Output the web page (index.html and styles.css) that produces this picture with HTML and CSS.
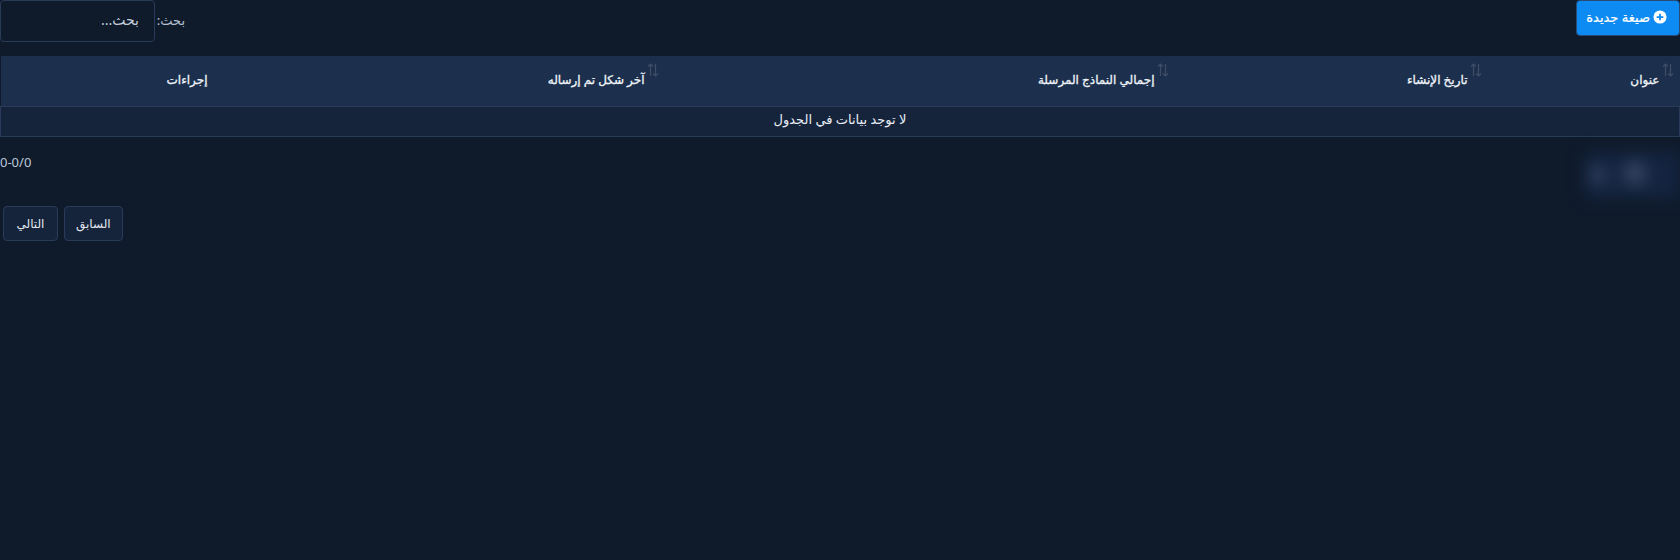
FILE: index.html
```html
<!DOCTYPE html>
<html lang="ar" dir="rtl">
<head>
    <meta charset="UTF-8" />
    <title>الصيغ</title>
    <link rel="stylesheet" href="styles.css">
</head>
<body>
    <div class="toolbar">
        <button class="btn-new">
            <svg class="plus-icon" viewBox="0 0 16 16"><circle cx="8" cy="8" r="7.500" fill="#fff"/><path d="M8 4.200v7.600M4.200 8h7.600" stroke="#0d8bf2" stroke-width="2"/></svg>
            صيغة جديدة
        </button>
        <div class="search">
            <label>بحث:</label>
            <input type="text" placeholder="بحث..." />
        </div>
    </div>

    <table class="data-table">
        <thead>
            <tr>
                <th class="col-title"><svg class="sort-icon" viewBox="0 0 12 16"><path d="M3.500 14V2M1 4.500 3.500 2 6 4.500M8.500 2v12M6 11.500 8.500 14l2.500-2.500" /></svg>عنوان</th>
                <th class="col-date"><svg class="sort-icon" viewBox="0 0 12 16"><path d="M3.500 14V2M1 4.500 3.500 2 6 4.500M8.500 2v12M6 11.500 8.500 14l2.500-2.500" /></svg>تاريخ الإنشاء</th>
                <th class="col-total"><svg class="sort-icon" viewBox="0 0 12 16"><path d="M3.500 14V2M1 4.500 3.500 2 6 4.500M8.500 2v12M6 11.500 8.500 14l2.500-2.500" /></svg>إجمالي النماذج المرسلة</th>
                <th class="col-last"><svg class="sort-icon" viewBox="0 0 12 16"><path d="M3.500 14V2M1 4.500 3.500 2 6 4.500M8.500 2v12M6 11.500 8.500 14l2.500-2.500" /></svg>آخر شكل تم إرساله</th>
                <th class="col-actions">إجراءات</th>
            </tr>
        </thead>
        <tbody>
            <tr>
                <td colspan="5">لا توجد بيانات في الجدول</td>
            </tr>
        </tbody>
    </table>

    <div class="count" dir="ltr">0-0/0</div>

    <div class="pager" dir="ltr">
        <button>التالي</button>
        <button>السابق</button>
    </div>

    <div class="blur-blob">
        <span class="dot dot-small"></span>
        <span class="dot dot-big"></span>
    </div>
</body>
</html>
```

FILE: styles.css
```css
html, body {
    height: 100%;
}
body {
    margin: 0;
    background-color: #0f1a2b;
    color: #e2e8f0;
    font-family: "Noto Sans", "DejaVu Sans", sans-serif;
    font-size: 13px;
    position: relative;
    overflow: hidden;
}
.toolbar {
    display: flex;
    justify-content: space-between;
    align-items: flex-start;
    height: 56px;
}
.btn-new {
    display: flex;
    align-items: center;
    gap: 3px;
    box-sizing: border-box;
    width: 104px;
    height: 36px;
    padding: 0 12px 3px 0;
    background-color: #0d8bf2;
    color: #fff;
    border: 1px solid #2a4a73;
    border-radius: 4px;
    font: inherit;
    white-space: nowrap;
    -webkit-text-stroke: 0.2px #fff;
}
.plus-icon {
    width: 14px;
    height: 14px;
    flex: none;
}
.search {
    display: flex;
    align-items: flex-start;
}
.search label {
    color: #b6c2d2;
    width: 30px;
    line-height: 40px;
}
.search input {
    box-sizing: border-box;
    width: 155px;
    height: 42px;
    padding: 0 15px 4px;
    background-color: #0f1a2b;
    color: #e2e8f0;
    border: 1px solid #2a3b59;
    border-radius: 4px;
    font: inherit;
    font-size: 14px;
}
.search input::placeholder {
    color: #c3cedb;
    opacity: 1;
}
.data-table {
    width: 1679px;
    border-collapse: collapse;
    table-layout: fixed;
}
.data-table th {
    height: 50px;
    padding: 0 20px 2px;
    box-sizing: border-box;
    background-color: #1c304d;
    color: #f0f4fa;
    font-size: 12px;
    font-weight: 400;
    -webkit-text-stroke: 0.3px #f0f4fa;
    text-align: right;
    white-space: nowrap;
}
.data-table td {
    height: 30px;
    padding: 0 0 5px;
    box-sizing: border-box;
    background-color: #16243b;
    border: 1px solid #2a3b59;
    color: #e8eef6;
    text-align: center;
}
.col-title { width: 192px; }
.col-date { width: 313px; }
.col-total { width: 510px; }
.col-last { width: 437px; }
.col-actions { width: 227px; }
.sort-icon {
    position: absolute;
    width: 12px;
    height: 16px;
    margin: -9px -14px 0 0;
    fill: none;
    stroke: #3f4e66;
    stroke-width: 1.2;
}
.count {
    margin-top: 16px;
    height: 19px;
    line-height: 19px;
    color: #bccadb;
    text-align: left;
}
.pager {
    display: flex;
    gap: 6px;
    margin-top: 34px;
    padding-left: 3px;
}
.pager button {
    box-sizing: border-box;
    min-width: 55px;
    height: 35px;
    padding: 0 11px;
    background-color: #16243b;
    color: #e2e8f0;
    border: 1px solid #2a3b59;
    border-radius: 4px;
    font: inherit;
    font-size: 12px;
}
.blur-blob {
    position: absolute;
    left: 1585px;
    top: 152px;
    width: 95px;
    height: 46px;
    background-color: #142440;
    filter: blur(8px);
}
.dot {
    position: absolute;
    border-radius: 50%;
    background-color: #354561;
}
.dot-small {
    left: 5px;
    top: 14px;
    width: 16px;
    height: 18px;
}
.dot-big {
    left: 38px;
    top: 9px;
    width: 24px;
    height: 24px;
}
```
